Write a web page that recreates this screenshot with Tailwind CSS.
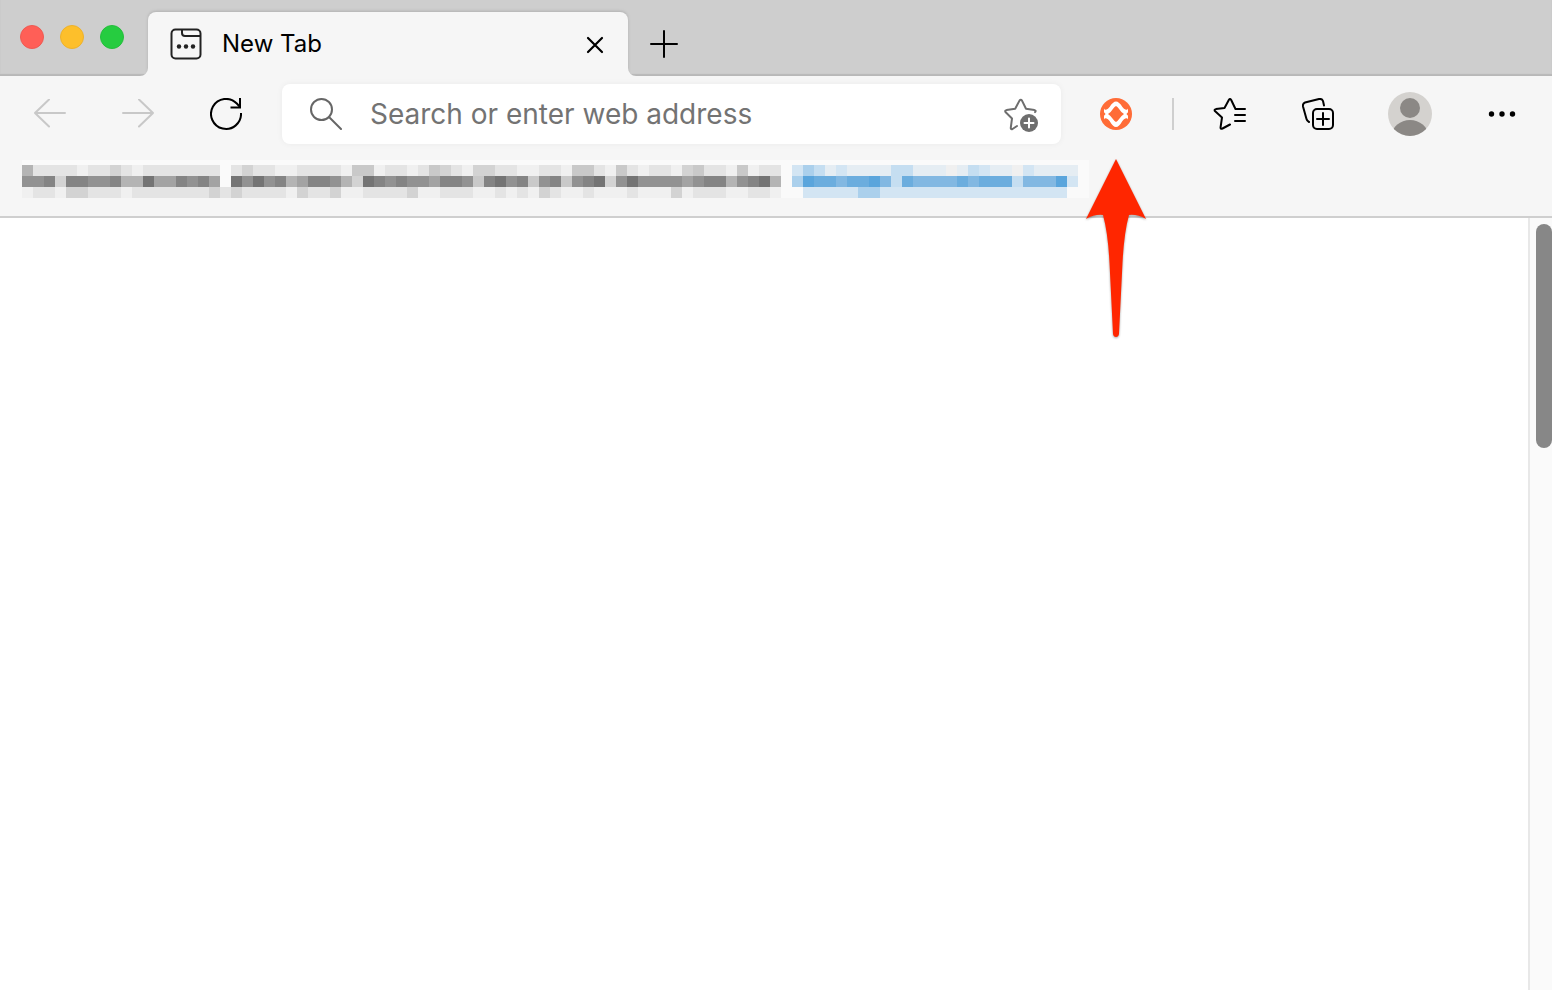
<!DOCTYPE html>
<html lang="en">
<head>
    <meta charset="UTF-8">
    <meta name="viewport" content="width=device-width, initial-scale=1.0">
    <title>New Tab</title>
    <script src="https://cdn.jsdelivr.net/npm/@tailwindcss/browser@4"></script>
</head>
<body class="flex flex-col h-screen overflow-hidden bg-white font-['Inter',sans-serif] text-black">

    <!-- Tab strip -->
    <header class="flex items-end h-[76px] shrink-0 overflow-hidden bg-[#cecece] shadow-[inset_0_-2px_1px_#b8b8b8]">
        <div class="flex gap-4 pl-5 w-[148px] h-[51px] shrink-0">
            <button type="button" aria-label="Close window" class="size-6 rounded-full bg-[#ff5f57] border border-[#ee5a52]"></button>
            <button type="button" aria-label="Minimize window" class="size-6 rounded-full bg-[#fdbf2b] border border-[#edb22c]"></button>
            <button type="button" aria-label="Zoom window" class="size-6 rounded-full bg-[#26cc40] border border-[#25be3c]"></button>
        </div>
        <div class="relative flex items-center w-[480px] h-16 pl-[22px] pr-5 rounded-t-lg bg-[#f6f6f6] shadow-[0_-1px_3px_#b0b0b0]">
            <svg class="absolute bottom-0 -left-2 size-2" viewBox="0 0 8 8" aria-hidden="true"><path d="M8 0v8H0a8 8 0 0 0 8-8z" fill="#f6f6f6"/></svg>
            <svg class="absolute bottom-0 -right-2 size-2" viewBox="0 0 8 8" aria-hidden="true"><path d="M0 0v8h8a8 8 0 0 1-8-8z" fill="#f6f6f6"/></svg>
            <svg class="size-8" viewBox="0 0 32 32" fill="none" stroke="#222" stroke-width="2" aria-hidden="true">
                <rect x="1.500" y="1.500" width="29" height="29" rx="4"/>
                <path d="M12 1v4a3 3 0 0 0 3 3h16"/>
                <g fill="#222" stroke="none"><circle cx="9" cy="18.500" r="2.200"/><circle cx="16" cy="18.500" r="2.200"/><circle cx="23" cy="18.500" r="2.200"/></g>
            </svg>
            <span class="ml-5 flex-1 text-2xl">New Tab</span>
            <button type="button" aria-label="Close tab" class="flex items-center justify-center size-[26px]">
                <svg class="size-[18px] mt-[2px]" viewBox="0 0 18 18" stroke="#000" stroke-width="2.200" stroke-linecap="round"><path d="M2 2l14 14M16 2L2 16"/></svg>
            </button>
        </div>
        <button type="button" aria-label="New tab" class="flex items-center justify-center w-[72px] h-16">
            <svg class="size-7" viewBox="0 0 28 28" stroke="#000" stroke-width="2" stroke-linecap="round"><path d="M14 1v26M1 14h26"/></svg>
        </button>
    </header>

    <div class="shrink-0 h-[142px] bg-[#f6f6f6] border-b-2 border-[#cfcfcf]">
        <!-- Toolbar -->
        <nav class="flex items-center h-[60px] mt-2 px-[6px]">
            <button type="button" disabled aria-label="Back" class="flex justify-center w-[88px]">
                <svg class="w-8 h-[30px]" viewBox="0 0 32 30" fill="none" stroke="#c8c8c8" stroke-width="2" stroke-linecap="round" stroke-linejoin="round"><path d="M15 0.500L1 14l14 13.500M1 14h30"/></svg>
            </button>
            <button type="button" disabled aria-label="Forward" class="flex justify-center w-[88px]">
                <svg class="w-8 h-[30px]" viewBox="0 0 32 30" fill="none" stroke="#c8c8c8" stroke-width="2" stroke-linecap="round" stroke-linejoin="round"><path d="M17 0.500l14 13.500-14 13.500M31 14H1"/></svg>
            </button>
            <button type="button" aria-label="Refresh" class="flex justify-center w-[88px]">
                <svg class="size-8" viewBox="0 0 32 32" fill="none" stroke="#000" stroke-width="2"><path d="M31 15a15 15 0 1 1-4.200-9.500L30 9"/><path d="M30 0v9.500h-9.500"/></svg>
            </button>

            <div class="flex items-center flex-1 h-[60px] ml-3 mr-[11px] pl-7 pr-[22px] rounded-lg bg-white shadow-[0_0_6px_#0000000d]">
                <svg class="size-8 shrink-0" viewBox="0 0 32 32" fill="none" stroke="#666" stroke-width="2" stroke-linecap="round" aria-hidden="true"><circle cx="11.500" cy="11.500" r="10.500"/><path d="M19 19l12 12"/></svg>
                <input type="text" aria-label="Address bar" placeholder="Search or enter web address"
                       class="flex-1 min-w-0 ml-7 text-[28px] placeholder:text-[#737373] focus:outline-none">
                <button type="button" aria-label="Add this page to favorites" class="mt-[2px]">
                    <svg class="w-9 h-[34px]" viewBox="0 0 36 34" fill="none" stroke="#6e6e6e" stroke-width="2" stroke-linecap="round" stroke-linejoin="round">
                        <path d="M14 28l-4.500 3q-2 .8-1.700-1.400L9 20.500l-6.300-6.200q-1.300-1.700.8-2.200l8.700-1.300L16.500 2.600q1.300-1.800 2.500 0l4 8.200 8.500 1.300q2 .5.500 2"/>
                        <circle cx="26" cy="25" r="9" fill="#6e6e6e" stroke="none"/>
                        <path d="M26 20.500v9M21.500 25h9" stroke="#fff"/>
                    </svg>
                </button>
            </div>

            <div class="relative w-[88px]">
                <button type="button" aria-label="Extension" class="flex items-center justify-center w-full h-[60px]">
                    <svg class="size-8" viewBox="0 0 32 32">
                        <circle cx="16" cy="16" r="16" fill="#ff6c37"/>
                        <path d="M4 10.500q.5 1.500 2 1.200 2.200-.5 3.600-2.700Q13 3.500 16 3.500t6.400 5.500q1.400 2.200 3.600 2.700 1.500.3 2-1.200v11q-.5-1.500-2-1.200-2.200.5-3.600 2.700Q19 29 16 29t-6.400-6q-1.400-2.200-3.600-2.700-1.500-.3-2 1.200z" fill="#fff"/>
                        <path d="M16 8q1.500.8 2.700 2.500 2 3.300 5.300 5.500-3.300 2.200-5.300 5.500Q17.500 23.200 16 24q-1.500-.8-2.700-2.500-2-3.300-5.300-5.500 3.300-2.200 5.300-5.500Q14.500 8.800 16 8z" fill="#ff6c37"/>
                        <path d="M4 14.200L5.600 16 4 17.800zM28 14.200L26.400 16l1.600 1.800z" fill="#ff6c37"/>
                    </svg>
                </button>
                <!-- Pointer to the extension icon -->
                <svg class="absolute left-3 top-[75px] w-16 h-[184px] drop-shadow-[0_1px_1px_#00000059]" viewBox="0 0 64 184" aria-hidden="true">
                    <path d="M32 0L62 60Q53 55 45 56Q40 74 38.500 104L35 175Q34.500 178 32 178Q29.500 178 29 175L25.500 104Q24 74 19 56Q11 55 2 60Z" fill="#ff2600"/>
                </svg>
            </div>
            <div class="w-[2px] h-8 mx-3 bg-[#cfcfcf]"></div>
            <button type="button" aria-label="Favorites" class="flex justify-center w-[88px]">
                <svg class="w-[34px] h-8" viewBox="0 0 34 32" fill="none" stroke="#000" stroke-width="2" stroke-linecap="round" stroke-linejoin="round">
                    <path d="M17 26.500l-7.500 4q-2.200 1-1.900-1.300L9 19.500l-6.800-6.200q-1.500-1.600.8-2.200l8.500-1.200L15.800 2q1.200-1.800 2.400 0l4.300 9H32M22 17h10M22 23h10"/>
                </svg>
            </button>
            <button type="button" aria-label="Collections" class="flex justify-center w-[88px]">
                <svg class="size-8" viewBox="0 0 32 32" fill="none" stroke="#000" stroke-width="2" stroke-linecap="round" stroke-linejoin="round">
                    <rect x="11" y="11" width="20" height="20" rx="4"/>
                    <path d="M21 15v12M15 21h12M7 24q-2-1-2.500-3L1 8.500Q.5 5.500 3 4.500L17 1q3-.5 4 2l1 4.500"/>
                </svg>
            </button>
            <button type="button" aria-label="Profile" class="flex justify-center w-[88px] ml-1">
                <svg class="size-11" viewBox="0 0 44 44">
                    <defs><clipPath id="face"><circle cx="22" cy="22" r="22"/></clipPath></defs>
                    <circle cx="22" cy="22" r="22" fill="#d4d2cf"/>
                    <g clip-path="url(#face)" fill="#8b8885"><circle cx="22" cy="16" r="10"/><ellipse cx="22" cy="43" rx="18" ry="15"/></g>
                </svg>
            </button>
            <button type="button" aria-label="Settings and more" class="flex justify-center w-[88px] ml-1">
                <svg class="w-7 h-6" viewBox="0 0 28 24"><circle cx="3.500" cy="12" r="2.700"/><circle cx="14" cy="12" r="2.700"/><circle cx="24.500" cy="12" r="2.700"/></svg>
            </button>
        </nav>

        <!-- Favorites bar, pixelated -->
        <svg id="favoritesBar" class="mt-4 ml-[22px] w-[1067px] h-[38px]" viewBox="0 0 1067 38" shape-rendering="crispEdges" role="img" aria-label="Pixelated favorites bar message"></svg>
    </div>

    <main class="flex flex-1 min-h-0">
        <div class="flex-1"></div>
        <div class="w-6 pt-[6px] pl-[6px] bg-[#fafafa] border-l-2 border-[#e8e8e8]">
            <div class="w-4 h-56 rounded-full bg-[#878787]"></div>
        </div>
    </main>

    <script>
        // One character per mosaic cell, ten cells per group
        const palette = {
            '7': '#747474', '8': '#848484', '9': '#929292', 'a': '#a3a3a3', 'b': '#b4b4b4',
            'c': '#c9c9c9', 'd': '#d3d3d3', 'e': '#e4e4e4', 'f': '#f0f0f0', 'w': '#fafafa',
            'p': '#5aa5dc', 'q': '#6badde', 'r': '#82b8e2', 's': '#abd0ec', 't': '#c5def1', 'u': '#d3e5f3', 'v': '#e5edf3'
        };
        const rows = [
            'beeeefeede feeeeeeewe deeffeeeef ccfeefecde fddeeffeef ccefcefeef dceefcfeew ustvuvvvvt tvvvfvtuvv fuvvvvw',
            '998d88998b b7aa898aw7 9798ba889b d789899a88 9c8798c98c 987d979999 a988b987bw spqqrqqprt qrrrrqrqqq trrrpuw',
            'feefddeeef eeeeeeeded eeeefdeedf feeeedffee effefefdef fefffefffd feeeffeefw wuuuuussuu uuuuuuuuuu uuuuuww'
        ];

        const svg = document.getElementById('favoritesBar');
        function addRect(x, y, w, h, fill) {
            const rect = document.createElementNS('http://www.w3.org/2000/svg', 'rect');
            rect.setAttribute('x', x);
            rect.setAttribute('y', y);
            rect.setAttribute('width', w);
            rect.setAttribute('height', h);
            rect.setAttribute('fill', fill);
            svg.appendChild(rect);
        }
        addRect(0, 0, 1067, 5, '#fafafa');
        rows.forEach((row, r) => {
            [...row.replaceAll(' ', '')].forEach((cell, c) => addRect(c * 11, 5 + r * 11, 11, 11, palette[cell]));
        });
    </script>
</body>
</html>
